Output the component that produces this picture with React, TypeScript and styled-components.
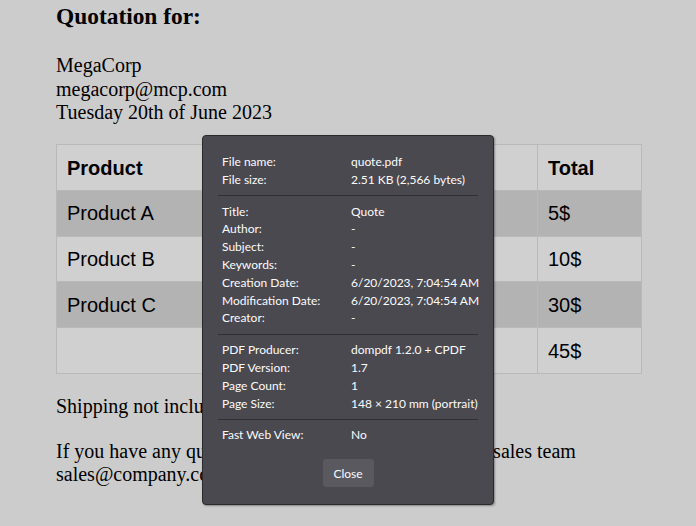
import React from "react";
import styled, { createGlobalStyle } from "styled-components";

const GlobalStyle = createGlobalStyle`
  html, body {
    margin: 0;
    padding: 0;
    background: #cccccc;
    overflow: hidden;
  }
  body {
    width: 696px;
    height: 526px;
  }
`;

const Viewport = styled.div`
  position: relative;
  width: 696px;
  height: 526px;
  overflow: hidden;
  background: #cccccc;
`;

const Doc = styled.div`
  padding: 3px 0 0 56px;
  width: 585px;
  font-family: "Liberation Serif", "Times New Roman", serif;
  font-size: 20px;
  line-height: 23.5px;
  color: #000;
`;

const Heading = styled.h3`
  margin: 0;
  font-size: 23.4px;
  line-height: 27px;
  font-weight: bold;
`;

const Para = styled.p<{ $top: number }>`
  margin: ${(p) => p.$top}px 0 0 0;
`;

const Table = styled.table`
  margin-top: 19.5px;
  width: 585px;
  border-collapse: collapse;
  table-layout: fixed;
  font-family: "Liberation Sans", Arial, sans-serif;
  font-size: 20px;
  border: 1px solid #b9b9b9;
`;

const Row = styled.tr<{ $dark?: boolean }>`
  height: 45.8px;
  background: ${(p) => (p.$dark ? "#b3b3b3" : "#d0d0d0")};
`;

const Cell = styled.td<{ $head?: boolean }>`
  border: 1px solid #b9b9b9;
  padding: 2px 10px 0 10px;
  font-weight: ${(p) => (p.$head ? "bold" : "normal")};
  vertical-align: middle;
`;

const Dialog = styled.div`
  position: absolute;
  left: 202px;
  top: 135px;
  width: 260px;
  padding: 17px 15px 17px 15px;
  background: #4a494f;
  border: 1px solid #2a2a2e;
  border-radius: 4px;
  box-shadow: 1px 1px 2px rgba(0, 0, 0, 0.35);
  font-family: Lato, "Noto Sans", sans-serif;
  font-size: 12px;
  color: #fbfbfe;
  display: flex;
  flex-direction: column;
`;

const PropRow = styled.div`
  display: grid;
  grid-template-columns: 129px 1fr;
  height: 17.8px;
  line-height: 17.8px;
  padding-left: 4px;
  white-space: nowrap;
`;

const Separator = styled.div`
  flex: none;
  height: 1px;
  margin: 6.5px 0;
  background: #2f2e34;
`;

const Buttons = styled.div`
  display: flex;
  justify-content: center;
  margin-top: 15px;
`;

const CloseButton = styled.button`
  width: 51px;
  height: 28px;
  padding: 0;
  border: none;
  border-radius: 3px;
  background: #5a595f;
  color: #fbfbfe;
  font-family: Lato, "Noto Sans", sans-serif;
  font-size: 12px;
`;

type Prop = [string, string];

const groups: Prop[][] = [
  [
    ["File name:", "quote.pdf"],
    ["File size:", "2.51 KB (2,566 bytes)"],
  ],
  [
    ["Title:", "Quote"],
    ["Author:", "-"],
    ["Subject:", "-"],
    ["Keywords:", "-"],
    ["Creation Date:", "6/20/2023, 7:04:54 AM"],
    ["Modification Date:", "6/20/2023, 7:04:54 AM"],
    ["Creator:", "-"],
  ],
  [
    ["PDF Producer:", "dompdf 1.2.0 + CPDF"],
    ["PDF Version:", "1.7"],
    ["Page Count:", "1"],
    ["Page Size:", "148 × 210 mm (portrait)"],
  ],
  [["Fast Web View:", "No"]],
];

const rows = [
  { product: "Product A", qty: "1", price: "5$", total: "5$", dark: true },
  { product: "Product B", qty: "2", price: "5$", total: "10$", dark: false },
  { product: "Product C", qty: "3", price: "10$", total: "30$", dark: true },
  { product: "", qty: "", price: "", total: "45$", dark: false },
];

export default function App() {
  return (
    <Viewport>
      <GlobalStyle />
      <Doc>
        <Heading>Quotation for:</Heading>
        <Para $top={24}>
          MegaCorp
          <br />
          megacorp@mcp.com
          <br />
          Tuesday 20th of June 2023
        </Para>
        <Table>
          <colgroup>
            <col style={{ width: 194 }} />
            <col style={{ width: 150 }} />
            <col style={{ width: 137 }} />
            <col style={{ width: 104 }} />
          </colgroup>
          <tbody>
            <Row>
              <Cell $head>Product</Cell>
              <Cell $head>Quantity</Cell>
              <Cell $head>Price</Cell>
              <Cell $head>Total</Cell>
            </Row>
            {rows.map((r, i) => (
              <Row key={i} $dark={r.dark}>
                <Cell>{r.product}</Cell>
                <Cell>{r.qty}</Cell>
                <Cell>{r.price}</Cell>
                <Cell>{r.total}</Cell>
              </Row>
            ))}
          </tbody>
        </Table>
        <Para $top={21}>Shipping not included.</Para>
        <Para $top={21.5}>
          If you have any questions about us, please contact our sales team sales@company.com
        </Para>
      </Doc>
      <Dialog>
        {groups.map((g, gi) => (
          <React.Fragment key={gi}>
            {gi > 0 && <Separator />}
            {g.map(([k, v]) => (
              <PropRow key={k}>
                <span>{k}</span>
                <span>{v}</span>
              </PropRow>
            ))}
          </React.Fragment>
        ))}
        <Buttons>
          <CloseButton>Close</CloseButton>
        </Buttons>
      </Dialog>
    </Viewport>
  );
}
